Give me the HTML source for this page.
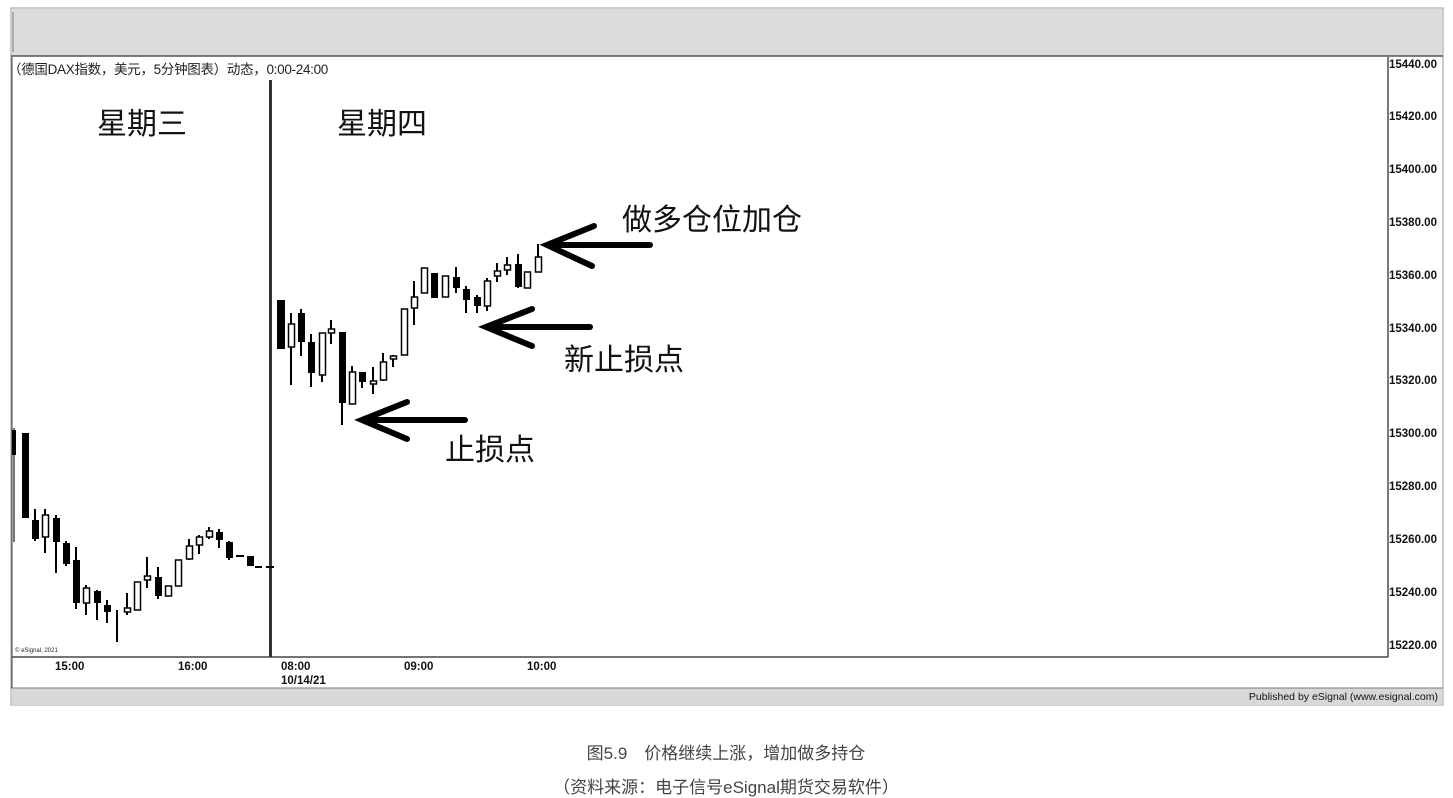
<!DOCTYPE html>
<html><head><meta charset="utf-8"><style>
html,body{margin:0;padding:0;background:#fff;width:1453px;height:798px;overflow:hidden}
svg{display:block}
.ax{font-family:"Liberation Sans",sans-serif;font-weight:bold;font-size:11.5px;fill:#111}
.hw{font-family:"Liberation Sans","WenQuanYi Zen Hei","Noto Sans CJK SC",sans-serif;font-size:30px;fill:#111;font-weight:normal}
.cap{font-family:"Liberation Sans","Noto Sans CJK SC",sans-serif;font-size:17px;fill:#444}
</style></head><body>
<svg width="1453" height="798" viewBox="0 0 1453 798" xmlns="http://www.w3.org/2000/svg">
<rect x="11" y="8" width="1432" height="697" fill="#fff" stroke="#999" stroke-width="1"/>
<rect x="12" y="9" width="1430" height="47" fill="#dcdcdc"/>
<line x1="11" y1="56" x2="1443" y2="56" stroke="#555" stroke-width="1.5"/>
<line x1="13" y1="12" x2="13" y2="52" stroke="#777" stroke-width="1"/>
<rect x="12" y="688" width="1430" height="17" fill="#d8d8d8"/>
<line x1="11" y1="688" x2="1443" y2="688" stroke="#777"/>
<line x1="1388" y1="57" x2="1388" y2="657" stroke="#222" stroke-width="1.2"/>
<line x1="12" y1="657" x2="1388" y2="657" stroke="#222" stroke-width="1.2"/>
<line x1="12" y1="57" x2="12" y2="688" stroke="#444" stroke-width="1"/>
<text x="8" y="74" font-family="Liberation Sans,'Noto Sans CJK SC',sans-serif" font-size="13.5" fill="#222" letter-spacing="-0.3">（德国DAX指数，美元，5分钟图表）动态，0:00-24:00</text>
<rect x="269" y="80" width="3" height="577" fill="#333"/>
<g class="ax">
<text x="1389" y="68">15440.00</text>
<text x="1389" y="120">15420.00</text>
<text x="1389" y="173">15400.00</text>
<text x="1389" y="226">15380.00</text>
<text x="1389" y="279">15360.00</text>
<text x="1389" y="332">15340.00</text>
<text x="1389" y="384">15320.00</text>
<text x="1389" y="437">15300.00</text>
<text x="1389" y="490">15280.00</text>
<text x="1389" y="543">15260.00</text>
<text x="1389" y="596">15240.00</text>
<text x="1389" y="649">15220.00</text>
<text x="55" y="670">15:00</text>
<text x="178" y="670">16:00</text>
<text x="281" y="670">08:00</text>
<text x="281" y="684">10/14/21</text>
<text x="404" y="670">09:00</text>
<text x="527" y="670">10:00</text>
</g>
<text x="15" y="652" font-family="Liberation Sans,sans-serif" font-size="6" fill="#222">© eSignal, 2021</text>
<text x="1438" y="700" text-anchor="end" font-family="Liberation Sans,sans-serif" font-size="10.5" fill="#111">Published by eSignal (www.esignal.com)</text>
<g stroke="#000" stroke-width="2">
<line x1="14" y1="428" x2="14" y2="542" stroke="#777"/>
<line x1="35" y1="509" x2="35" y2="541"/><line x1="45" y1="509" x2="45" y2="553"/>
<line x1="56" y1="515" x2="56" y2="573"/><line x1="66" y1="541" x2="66" y2="566"/>
<line x1="76" y1="547" x2="76" y2="609"/><line x1="86" y1="585" x2="86" y2="615"/>
<line x1="97" y1="590" x2="97" y2="620"/><line x1="107" y1="600" x2="107" y2="623"/>
<line x1="117" y1="610" x2="117" y2="642"/><line x1="127" y1="593" x2="127" y2="615"/>
<line x1="147" y1="557" x2="147" y2="588"/><line x1="158" y1="567" x2="158" y2="599"/>
<line x1="189" y1="539" x2="189" y2="560"/><line x1="199" y1="535" x2="199" y2="554"/>
<line x1="209" y1="527" x2="209" y2="539"/><line x1="219" y1="529" x2="219" y2="548"/>
<line x1="229" y1="541" x2="229" y2="560"/>
<line x1="236" y1="556" x2="244" y2="556"/>
<line x1="255" y1="567" x2="262" y2="567"/><line x1="266" y1="567" x2="274" y2="567"/>
<line x1="291" y1="313" x2="291" y2="385"/><line x1="301" y1="309" x2="301" y2="356"/>
<line x1="311" y1="334" x2="311" y2="387"/><line x1="322" y1="333" x2="322" y2="382"/>
<line x1="331" y1="320" x2="331" y2="344"/><line x1="342" y1="332" x2="342" y2="425"/>
<line x1="352" y1="366" x2="352" y2="404"/><line x1="362" y1="372" x2="362" y2="388"/>
<line x1="373" y1="367" x2="373" y2="394"/><line x1="383" y1="353" x2="383" y2="381"/>
<line x1="393" y1="355" x2="393" y2="367"/><line x1="414" y1="281" x2="414" y2="325"/>
<line x1="456" y1="267" x2="456" y2="293"/><line x1="466" y1="286" x2="466" y2="313"/>
<line x1="477" y1="295" x2="477" y2="313"/><line x1="487" y1="278" x2="487" y2="311"/>
<line x1="497" y1="263" x2="497" y2="282"/><line x1="507" y1="257" x2="507" y2="275"/>
<line x1="518" y1="254" x2="518" y2="288"/><line x1="538" y1="244" x2="538" y2="272"/>
</g>
<g fill="#000">
<rect x="12" y="430" width="4" height="25"/>
<rect x="22" y="433" width="7" height="85"/><rect x="32" y="520" width="7" height="19"/>
<rect x="53" y="518" width="7" height="24"/><rect x="63" y="543" width="7" height="21"/>
<rect x="73" y="560" width="7" height="43"/><rect x="94" y="591" width="7" height="12"/>
<rect x="104" y="605" width="7" height="7"/><rect x="155" y="577" width="7" height="19"/>
<rect x="216" y="532" width="7" height="8"/><rect x="226" y="542" width="7" height="16"/>
<rect x="247" y="556" width="7" height="10"/>
<rect x="277" y="300" width="8" height="49"/><rect x="298" y="313" width="7" height="29"/>
<rect x="308" y="342" width="7" height="31"/><rect x="339" y="332" width="7" height="71"/>
<rect x="359" y="372" width="7" height="10"/><rect x="431" y="273" width="7" height="25"/>
<rect x="453" y="277" width="7" height="11"/><rect x="463" y="289" width="7" height="11"/>
<rect x="474" y="297" width="7" height="9"/><rect x="515" y="264" width="7" height="23"/>
</g>
<g fill="#fff" stroke="#000" stroke-width="1.5">
<rect x="42.5" y="515" width="6" height="22"/><rect x="83.5" y="588" width="6" height="15"/>
<rect x="124.5" y="608" width="6" height="4"/><rect x="134.5" y="582" width="6" height="28"/>
<rect x="144.5" y="576" width="6" height="4"/><rect x="165.5" y="586" width="6" height="10"/>
<rect x="175.5" y="560" width="6" height="26"/><rect x="186.5" y="546" width="6" height="13"/>
<rect x="196.5" y="537" width="6" height="8"/><rect x="206.5" y="531" width="6" height="6"/>
<rect x="288.5" y="324" width="6" height="23"/><rect x="319.5" y="333" width="6" height="42"/>
<rect x="328.5" y="329" width="6" height="4"/><rect x="349.5" y="372" width="6" height="32"/>
<rect x="370.5" y="381" width="6" height="3"/><rect x="380.5" y="362" width="6" height="18"/>
<rect x="390.5" y="356" width="6" height="3"/><rect x="401.5" y="309" width="6" height="46"/>
<rect x="411.5" y="297" width="6" height="11"/><rect x="421.5" y="268" width="6" height="25"/>
<rect x="442.5" y="276" width="6" height="21"/><rect x="484.5" y="281" width="6" height="25"/>
<rect x="494.5" y="271" width="6" height="5"/><rect x="504.5" y="265" width="6" height="5"/>
<rect x="524.5" y="272" width="6" height="16"/><rect x="535.5" y="257" width="6" height="15"/>
</g>
<g stroke="#000" stroke-width="6" stroke-linecap="round" fill="none">
<path d="M650 245 L547 245 M594 226 L547 245 L592 266"/>
<path d="M590 327 L486 327 M532 309 L486 327 L532 346"/>
<path d="M465 420 L362 420 M407 402 L362 420 L407 439"/>
</g>
<text class="hw" x="97" y="134">星期三</text>
<text class="hw" x="337" y="134">星期四</text>
<text class="hw" x="622" y="230">做多仓位加仓</text>
<text class="hw" x="564" y="370">新止损点</text>
<text class="hw" x="445" y="460">止损点</text>
<text class="cap" x="726" y="759" text-anchor="middle">图5.9　价格继续上涨，增加做多持仓</text>
<text class="cap" x="726" y="793" text-anchor="middle">（资料来源：电子信号eSignal期货交易软件）</text>
</svg>
</body></html>
